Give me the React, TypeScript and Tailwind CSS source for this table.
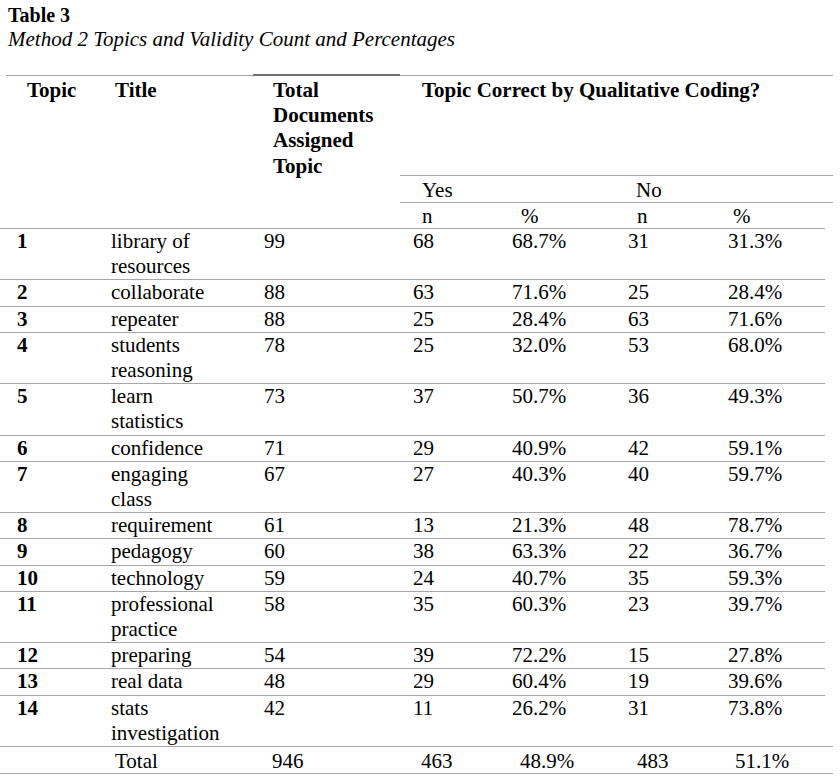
import React from "react";

type Row = {
  topic: string;
  title: string;
  total: string;
  yesN: string;
  yesPct: string;
  noN: string;
  noPct: string;
};

const rows: Row[] = [
  { topic: "1", title: "library of resources", total: "99", yesN: "68", yesPct: "68.7%", noN: "31", noPct: "31.3%" },
  { topic: "2", title: "collaborate", total: "88", yesN: "63", yesPct: "71.6%", noN: "25", noPct: "28.4%" },
  { topic: "3", title: "repeater", total: "88", yesN: "25", yesPct: "28.4%", noN: "63", noPct: "71.6%" },
  { topic: "4", title: "students reasoning", total: "78", yesN: "25", yesPct: "32.0%", noN: "53", noPct: "68.0%" },
  { topic: "5", title: "learn statistics", total: "73", yesN: "37", yesPct: "50.7%", noN: "36", noPct: "49.3%" },
  { topic: "6", title: "confidence", total: "71", yesN: "29", yesPct: "40.9%", noN: "42", noPct: "59.1%" },
  { topic: "7", title: "engaging class", total: "67", yesN: "27", yesPct: "40.3%", noN: "40", noPct: "59.7%" },
  { topic: "8", title: "requirement", total: "61", yesN: "13", yesPct: "21.3%", noN: "48", noPct: "78.7%" },
  { topic: "9", title: "pedagogy", total: "60", yesN: "38", yesPct: "63.3%", noN: "22", noPct: "36.7%" },
  { topic: "10", title: "technology", total: "59", yesN: "24", yesPct: "40.7%", noN: "35", noPct: "59.3%" },
  { topic: "11", title: "professional practice", total: "58", yesN: "35", yesPct: "60.3%", noN: "23", noPct: "39.7%" },
  { topic: "12", title: "preparing", total: "54", yesN: "39", yesPct: "72.2%", noN: "15", noPct: "27.8%" },
  { topic: "13", title: "real data", total: "48", yesN: "29", yesPct: "60.4%", noN: "19", noPct: "39.6%" },
  { topic: "14", title: "stats investigation", total: "42", yesN: "11", yesPct: "26.2%", noN: "31", noPct: "73.8%" },
];

const cols = "grid grid-cols-[111px_153px_149px_99px_116px_100px_97px]";

export default function App() {
  return (
    <div className="min-h-screen bg-white text-black font-['Liberation_Serif','Times_New_Roman',serif] text-[21px] leading-[25.2px]">
      {/* Caption */}
      <div className="pl-[8px] pt-[3px]">
        <p className="text-[20px] font-bold leading-[24px]">Table 3</p>
        <p className="italic leading-[25px]">Method 2 Topics and Validity Count and Percentages</p>
      </div>

      {/* Header */}
      <div className="mt-[23px] flex items-start">
        <div className="ml-[6px] w-[105px] border-t border-[#a6a6a6] pl-[21px] pt-[2px] font-bold">Topic</div>
        <div className="w-[142px] border-t border-[#a6a6a6] pl-[4px] pt-[2px] font-bold">Title</div>
        <div className="-mt-px w-[147px] border-t-2 border-[#6f6f6f] pl-[20px] pt-[2px] font-bold">
          Total
          <br />
          Documents
          <br />
          Assigned
          <br />
          Topic
        </div>
        <div className="w-[433px] border-t border-[#a6a6a6]">
          <div className="h-[100px] border-b border-[#a6a6a6] pl-[22px] pt-[2px] font-bold">
            Topic Correct by Qualitative Coding?
          </div>
          <div className="flex h-[27px] border-b border-[#a6a6a6] pt-[2px]">
            <span className="w-[236px] pl-[22px]">Yes</span>
            <span>No</span>
          </div>
          <div className="flex h-[25px] pt-px">
            <span className="w-[121px] pl-[22px]">n</span>
            <span className="w-[116px]">%</span>
            <span className="w-[96px]">n</span>
            <span>%</span>
          </div>
        </div>
      </div>

      {/* Body */}
      <div className="w-[825px]">
        {rows.map((r) => (
          <div key={r.topic} className={`${cols} border-t border-[#a6a6a6]`}>
            <div className="pl-[17px] font-bold">{r.topic}</div>
            <div>
              <div className="w-[115px]">{r.title}</div>
            </div>
            <div>{r.total}</div>
            <div>{r.yesN}</div>
            <div>{r.yesPct}</div>
            <div>{r.noN}</div>
            <div>{r.noPct}</div>
          </div>
        ))}
      </div>

      {/* Total */}
      <div className={`${cols} h-[28px] w-[833px] border-y border-[#a6a6a6] pt-[2px]`}>
        <div />
        <div className="pl-[4px]">Total</div>
        <div className="pl-[8px]">946</div>
        <div className="pl-[8px]">463</div>
        <div className="pl-[8px]">48.9%</div>
        <div className="pl-[9px]">483</div>
        <div className="pl-[7px]">51.1%</div>
      </div>
    </div>
  );
}
